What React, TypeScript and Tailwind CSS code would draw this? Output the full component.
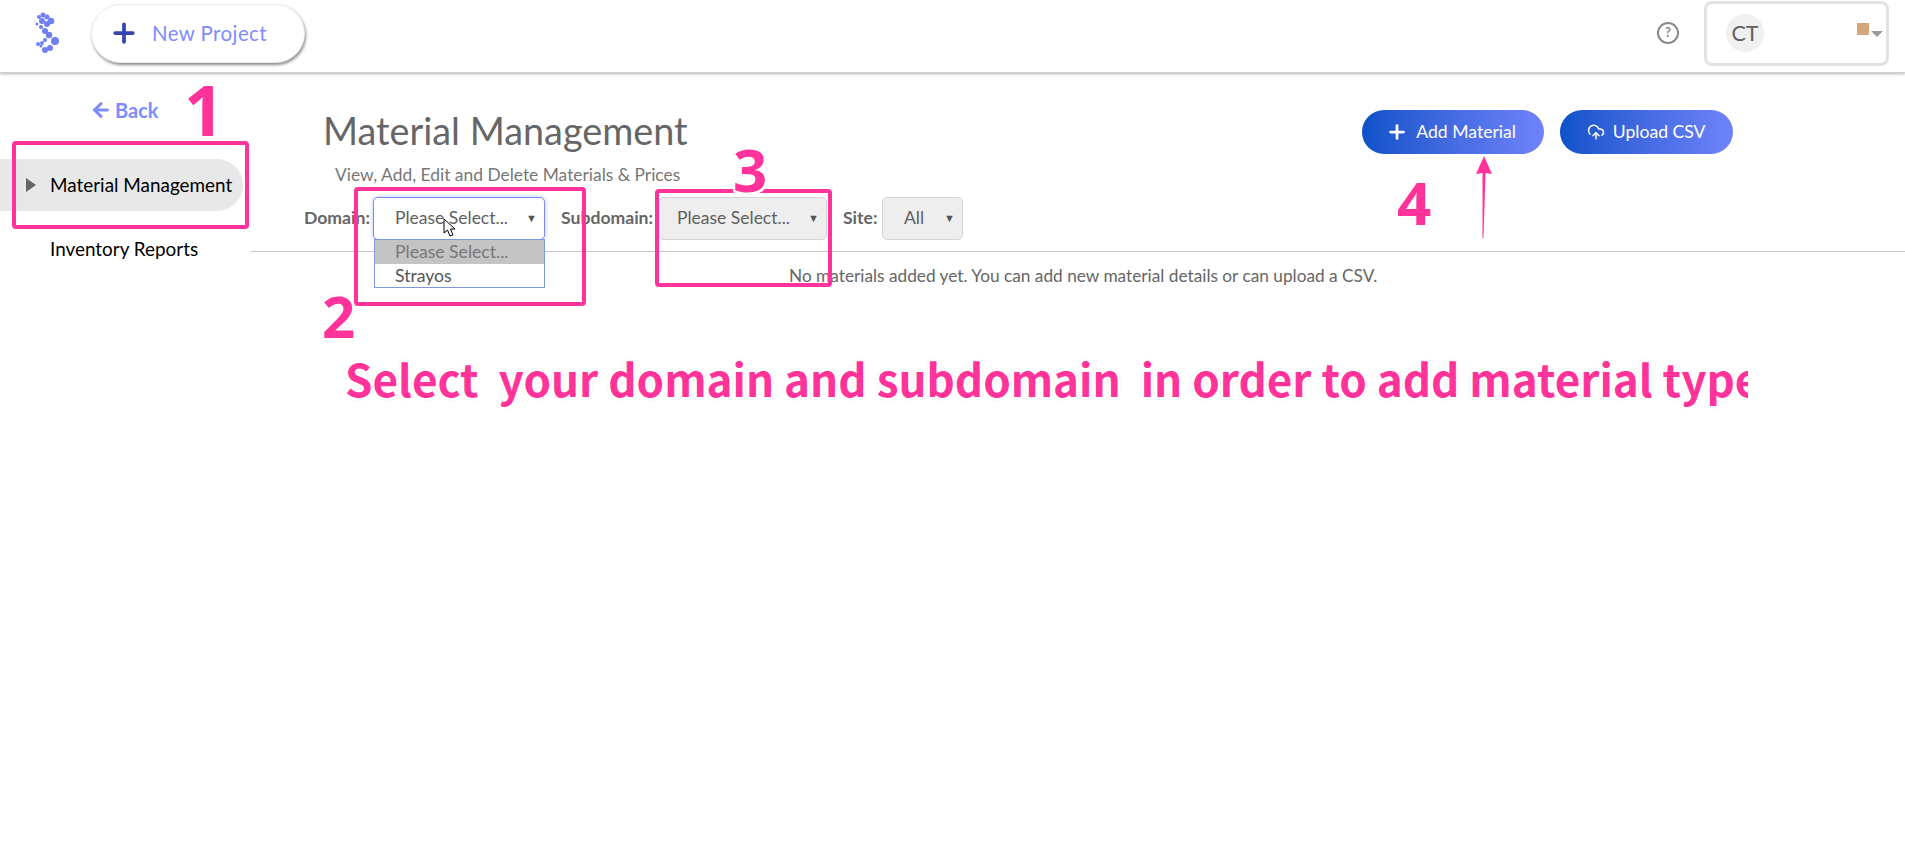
import React from "react";
import { Plus, ArrowLeft, CloudUpload } from "lucide-react";

const anno = "absolute font-bold text-[#ff3399] [font-family:'Noto_Sans',sans-serif] [text-shadow:2px_2px_0_#fff,-2px_-2px_0_#fff,2px_-2px_0_#fff,-2px_2px_0_#fff,0_0_4px_#ccc]";

function Logo() {
  const dots: [number, number, number][] = [
    [43, 12, 2.5],[39, 14, 2],[47, 14, 2.5],[42, 18, 3],[51, 18, 3.3],[47, 21, 3],[37, 21, 1.5],[35, 18, 0.6],[41, 24, 2],
    [45, 28, 3],[49, 32, 3.2],[55, 38, 4],[50, 45, 3],[45, 47, 3],[45, 37, 2],[42, 40, 2],[38, 41, 2],[41, 43, 1.6],
  ];
  return (
    <svg width="36" height="46" viewBox="30 7 36 46" className="shrink-0">
      {dots.map(([x, y, r], i) => (
        <circle key={i} cx={x} cy={y} r={r} fill="#6f80f5" />
      ))}
    </svg>
  );
}

function Select({ label, w, gray, focus, pad }: { label: string; w: string; gray?: boolean; focus?: boolean; pad: string }) {
  return (
    <div className={`${w} h-[43px] rounded-[5px] border flex items-center justify-between pr-[7px] text-[17.5px] text-[#5f5f5f] ${gray ? "bg-[#eeeeee] border-[#d4d4d4]" : ""} ${focus ? "bg-white border-[#7d8cf8] shadow-[0_0_4px_#b9c2fb]" : ""}`}>
      <span className={pad}>{label}</span>
      <span className="text-[#555] text-[11px]">▼</span>
    </div>
  );
}

export default function App() {
  return (
    <div className="relative w-[1905px] h-[846px] overflow-hidden bg-white text-[#5f5f5f] [font-family:Lato,sans-serif]">
      <header className="h-[73px] pb-[6px] border-b border-[#d0d0d0] shadow-[0_1px_3px_rgba(0,0,0,0.3)] flex items-center pl-[30px] pr-[16px] bg-white">
        <Logo />
        <button className="ml-[25px] w-[214px] h-[59px] rounded-[30px] bg-white shadow-[1px_2px_3px_rgba(0,0,0,0.45)] border border-[#eee] flex items-center pl-[17px]">
          <Plus size={30} strokeWidth={3} className="text-[#3346b0]" />
          <span className="ml-[13px] text-[20.5px] tracking-[0.4px] text-[#7f8cfb]">New Project</span>
        </button>
        <div className="ml-auto flex items-center gap-[25px]">
          <span className="w-[22px] h-[22px] rounded-full border-2 border-[#8a8a8a] flex items-center justify-center text-[13px] font-bold text-[#8a8a8a]">?</span>
          <div className="relative w-[185px] h-[65px] rounded-[8px] border-[3px] border-[#e2e2e2] flex items-center pl-[19px]">
            <span className="w-[38px] h-[38px] rounded-full bg-[#f0f0f0] flex items-center justify-center text-[21.5px]">CT</span>
            <span className="absolute left-[150px] top-[19px] w-[12px] h-[12px] bg-[#d3a67c]" />
            <span className="absolute left-[164px] top-[27px] w-0 h-0 border-x-[6px] border-x-transparent border-t-[6px] border-t-[#999]" />
          </div>
        </div>
      </header>

      <div className="flex">
        <aside className="w-[251px] shrink-0 flex flex-col">
          <div className="h-[86px] pt-[22px] pl-[90px] flex items-start">
            <span className="flex items-center gap-[3px] text-[20px] font-bold text-[#7d8cfb]">
              <ArrowLeft size={22} strokeWidth={3.25} />
              Back
            </span>
          </div>
          <div className="w-[243px] h-[52px] rounded-r-[26px] bg-[#e8e8e8] flex items-center text-black text-[18.9px]">
            <span className="ml-[26px] w-0 h-0 border-y-[7px] border-y-transparent border-l-[10px] border-l-[#666]" />
            <span className="ml-[14px]">Material Management</span>
          </div>
          <div className="mt-[24px] pl-[50px] text-[18.9px] text-black">Inventory Reports</div>
        </aside>

        <main className="flex-1 min-w-0">
          <div className="h-[179px] border-b border-[#c4c4c4] relative">
            <div className="flex items-start pt-[36px] pl-[72px]">
              <h1 className="text-[37.8px] leading-[44px] text-[#666]">Material Management</h1>
              <div className="ml-[674px] mt-[1px] flex gap-[16px]">
                <button className="w-[182px] h-[44px] rounded-[22px] bg-gradient-to-r from-[#0b52c9] to-[#6f83fb] flex items-center justify-center gap-[8px] pr-[3px] text-white text-[17.6px]">
                  <Plus size={22} strokeWidth={3} />
                  Add Material
                </button>
                <button className="w-[173px] h-[44px] rounded-[22px] bg-gradient-to-r from-[#0b52c9] to-[#6f83fb] flex items-center justify-center gap-[8px] text-white text-[17.6px]">
                  <CloudUpload size={18} strokeWidth={2} />
                  Upload CSV
                </button>
              </div>
            </div>
            <p className="ml-[84px] mt-[9px] text-[17.4px] leading-[24px] text-[#777]">View, Add, Edit and Delete Materials &amp; Prices</p>
            <div className="flex items-center pl-[53px] mt-[10px] text-[17.6px]">
              <b className="w-[69px] text-[#666]">Domain:</b>
              <Select label="Please Select..." w="w-[172px]" focus pad="pl-[21px]" />
              <b className="ml-[16px] w-[97px] whitespace-nowrap text-[#666]">Subdomain:</b>
              <Select label="Please Select..." w="w-[169px]" gray pad="pl-[18px]" />
              <b className="ml-[16px] w-[39px] text-[#666]">Site:</b>
              <Select label="All" w="w-[81px]" gray pad="pl-[21px]" />
            </div>
          </div>
          <p className="ml-[538px] mt-[12px] text-[17.25px] leading-[24px] text-[#666]">No materials added yet. You can add new material details or can upload a CSV.</p>
        </main>
      </div>

      {/* open dropdown */}
      <div className="absolute left-[374px] top-[239px] w-[171px] h-[49px] border border-[#7d97e0] bg-white text-[17.6px] leading-[23px]">
        <div className="h-[24px] bg-[#c4c4c4] pl-[20px] text-[#777]">Please Select...</div>
        <div className="pl-[20px] text-[#555]">Strayos</div>
      </div>

      {/* cursor */}
      <svg className="absolute left-[443px] top-[218px]" width="14" height="21" viewBox="0 0 14 21">
        <path d="M1 1 L1 15 L4.5 12 L7 18 L10 17 L7.5 11 L12 11 Z" fill="#fff" stroke="#000" strokeWidth="1" />
      </svg>

      {/* annotations */}
      <div className="absolute left-[12px] top-[141px] w-[237px] h-[88px] rounded-[4px] border-[4px] border-[#ff3399]" />
      <div className="absolute left-[354px] top-[187px] w-[232px] h-[119px] rounded-[4px] border-[4px] border-[#ff3399]" />
      <div className="absolute left-[655px] top-[189px] w-[177px] h-[98px] rounded-[4px] border-[4px] border-[#ff3399]" />
      <span className={`${anno} left-[184px] top-[64px] text-[70px] leading-[90px]`}>1</span>
      <span className={`${anno} left-[322px] top-[276px] text-[58px] leading-[80px]`}>2</span>
      <span className={`${anno} left-[733px] top-[129px] text-[60px] leading-[80px]`}>3</span>
      <span className={`${anno} left-[1397px] top-[162px] text-[60px] leading-[80px]`}>4</span>
      <div className={`${anno} left-[345px] top-[346px] w-[1403px] h-[64px] overflow-hidden whitespace-pre text-[44px] leading-[64px] [font-family:'Noto_Sans_CJK_KR',sans-serif]`}>
        Select  your domain and subdomain  in order to add material type
      </div>
      <svg className="absolute left-[1472px] top-[154px]" width="24" height="86" viewBox="0 0 24 86">
        <path d="M12 2 L20 20 L13.5 19 L11.5 84 L10.5 84 L10.5 19 L4 20 Z" fill="#ff3399" />
      </svg>
    </div>
  );
}
